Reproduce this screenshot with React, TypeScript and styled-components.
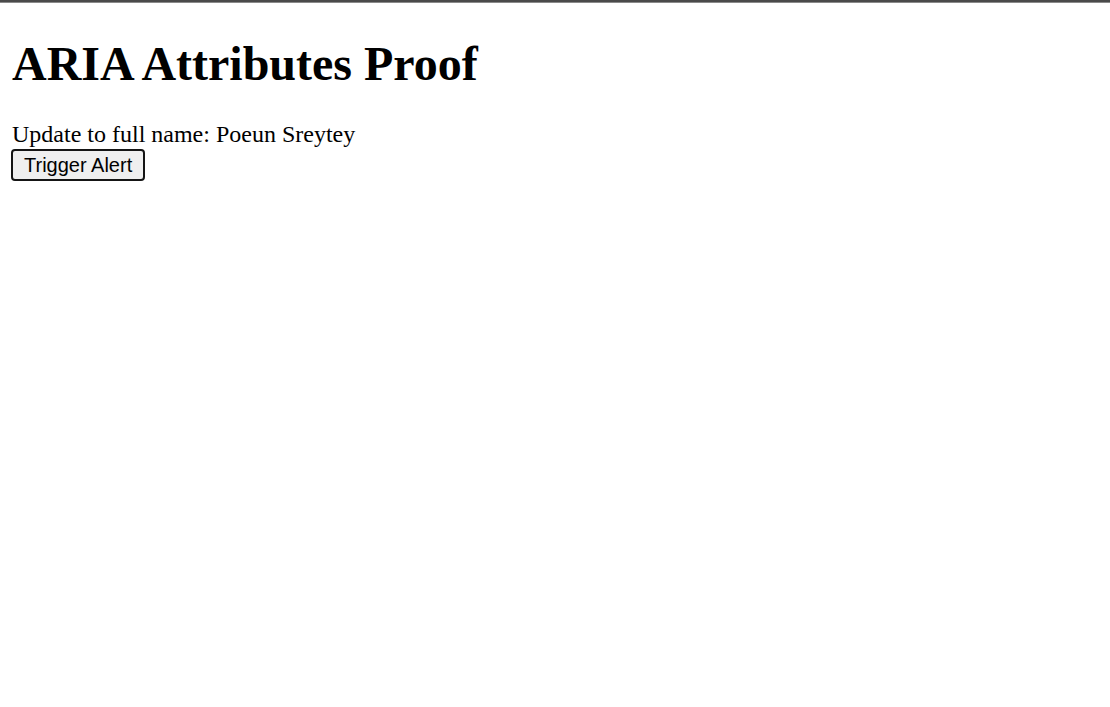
import React from "react";
import styled, { createGlobalStyle } from "styled-components";

const GlobalStyle = createGlobalStyle`
  html {
    border-top: 2px solid #4a4a4a;
  }
  body {
    margin: 0;
    padding: 12px;
    padding-top: 1px;
    font-family: "Liberation Serif", "Times New Roman", serif;
    font-size: 24px;
    color: #000;
    background: #fff;
  }
`;

const TopLine = styled.div`
  height: 1px;
  margin: -1px -12px 0;
  background: #8a8a8a;
`;

const Page = styled.main`
  display: block;
`;

const Title = styled.h1`
  font-size: 48px;
  font-weight: bold;
  margin: 33px 0 30px;
  line-height: normal;
`;

const Status = styled.div`
  line-height: normal;
`;

const AlertButton = styled.button`
  display: block;
  font-family: "Liberation Sans", Arial, sans-serif;
  font-size: 20px;
  line-height: normal;
  color: #000;
  background: #efefef;
  border: 2px solid #151515;
  border-radius: 4px;
  padding: 3px 11px 2px;
  margin: 1px 0 0 -1px;
  cursor: default;
`;

export default function App() {
  return (
    <>
      <GlobalStyle />
      <TopLine />
      <Page>
        <Title>ARIA Attributes Proof</Title>
        <Status aria-live="polite">Update to full name: Poeun Sreytey</Status>
        <AlertButton type="button">Trigger Alert</AlertButton>
      </Page>
    </>
  );
}
